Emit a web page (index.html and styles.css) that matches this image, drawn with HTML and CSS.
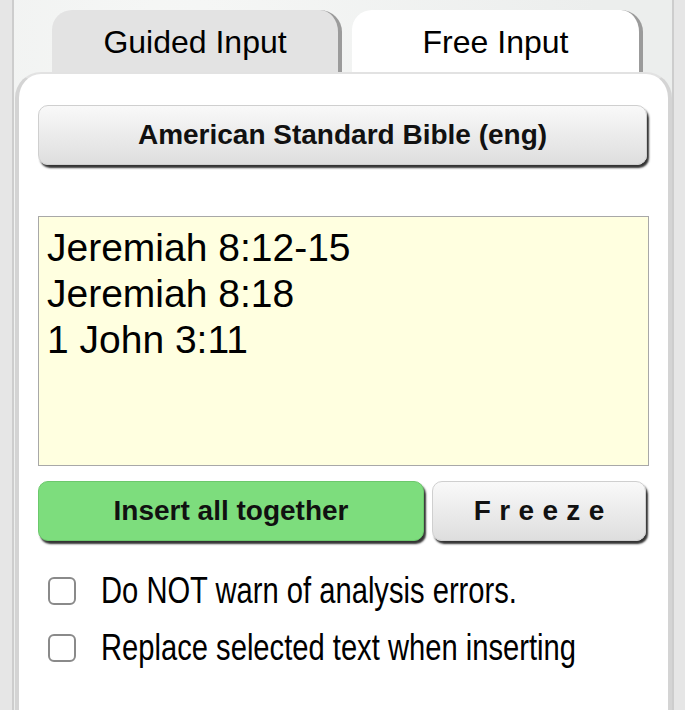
FILE: index.html
```html
<!DOCTYPE html>
<html lang="en">
  <head>
    <meta charset="UTF-8" />
    <meta name="viewport" content="width=device-width, initial-scale=1.0" />
    <title>Free Input</title>
    <link rel="stylesheet" href="styles.css">
  </head>
  <body>
    <div class="frame">
      <div class="tabs">
        <div class="tab">Guided Input</div>
        <div class="tab active">Free Input</div>
      </div>

      <div class="panel">
        <button type="button" class="bible-button">American Standard Bible (eng)</button>

        <textarea class="refs" spellcheck="false">Jeremiah 8:12-15
Jeremiah 8:18
1 John 3:11</textarea>

        <div class="actions">
          <button type="button" class="insert-button">Insert all together</button>
          <button type="button" class="freeze-button">Freeze</button>
        </div>

        <label class="option">
          <span class="box"></span>
          <span class="option-text">Do NOT warn of analysis errors.</span>
        </label>
        <label class="option">
          <span class="box"></span>
          <span class="option-text">Replace selected text when inserting</span>
        </label>
      </div>
    </div>
  </body>
</html>
```

FILE: styles.css
```css
html,
body {
  height: 100%;
}
body {
  margin: 0;
  background-color: #e6e6e6;
  font-family: "Liberation Sans", Arial, sans-serif;
  color: #111;
  overflow: hidden;
}
.frame {
  margin: 0 11px 0 12px;
  height: 100%;
  border-left: 2px solid #cdcdcd;
  border-right: 2px solid #cdcdcd;
  background: radial-gradient(ellipse at 25% 8%, #f6f7f6 0, #eceeed 60%);
  display: flex;
  flex-direction: column;
}
.tabs {
  display: flex;
  gap: 10px;
  padding: 10px 0 0 38px;
}
.tab {
  width: 290px;
  height: 62px;
  box-sizing: border-box;
  padding-top: 12px;
  line-height: 40px;
  text-align: center;
  font-size: 32px;
  color: #000;
  background-color: #e3e3e3;
  border-right: 4px solid #9b9b9b;
  border-radius: 20px 22px 0 0;
}
.tab.active {
  background-color: #fff;
  width: 291px;
}
.panel {
  flex: 1;
  margin-left: 1px;
  padding: 31px 19px 0 19px;
  background-color: #fff;
  border: 4px solid #d4d4d4;
  border-top: 2px solid #e2e2e2;
  border-bottom: none;
  border-radius: 26px 26px 0 0;
  display: flex;
  flex-direction: column;
}
button {
  font-family: "Liberation Sans", Arial, sans-serif;
  font-weight: bold;
  color: #111;
  border: 1px solid #cfcfcf;
  border-radius: 10px;
  box-shadow: 2px 3px 2px #333;
  cursor: pointer;
}
.bible-button {
  width: 609px;
  height: 60px;
  font-size: 28px;
  background: linear-gradient(#f9f9f9, #dedede);
}
.refs {
  margin-top: 51px;
  width: 611px;
  height: 250px;
  box-sizing: border-box;
  padding: 8px 8px;
  border: 1px solid #a8a8a8;
  background-color: #ffffe0;
  font-family: "Liberation Sans", Arial, sans-serif;
  font-size: 39px;
  line-height: 46px;
  color: #000;
  resize: none;
  outline: none;
}
.actions {
  display: flex;
  gap: 8px;
  margin-top: 15px;
  width: 608px;
}
.actions button {
  height: 60px;
  font-size: 28px;
}
.insert-button {
  width: 386px;
  background-color: #7ddd7d;
  border-color: #6cc86c;
}
.freeze-button {
  flex: 1;
  background: linear-gradient(#f9f9f9, #dedede);
  letter-spacing: 0.3em;
  text-indent: 0.3em;
}
.option {
  display: flex;
  align-items: center;
  gap: 25px;
  margin-left: 10px;
  height: 57px;
  white-space: nowrap;
}
.option:first-of-type {
  margin-top: 21px;
}
.box {
  flex: none;
  width: 24px;
  height: 24px;
  border: 2px solid #8a8a8a;
  border-radius: 6px;
}
.option-text {
  display: inline-block;
  font-size: 36px;
  color: #000;
  transform: scaleX(0.81);
  transform-origin: left center;
}
```
